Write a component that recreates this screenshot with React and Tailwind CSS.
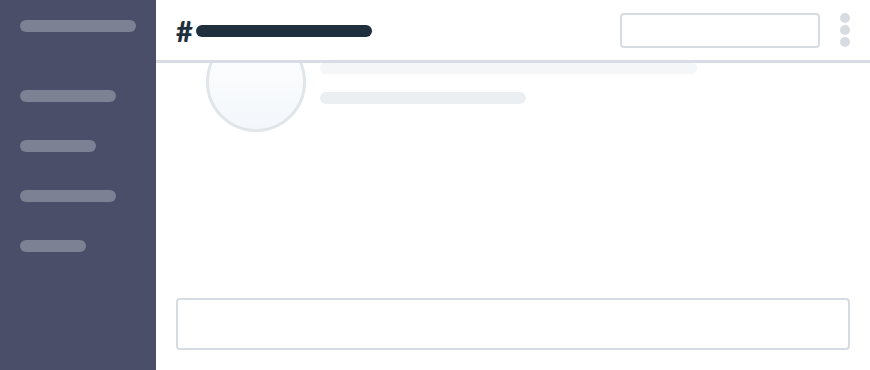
import React from 'react';

const navBars = ['w-[116px]', 'w-[96px]', 'w-[76px]', 'w-[96px]', 'w-[66px]'];

export default function App() {
    return (
        <div className="flex h-[370px] w-[870px] overflow-hidden bg-white font-['Liberation_Sans',sans-serif]">
            {/* Sidebar */}
            <aside className="w-[156px] shrink-0 bg-[#4a4e69] px-5 pt-5">
                <div className={`h-3 rounded-full bg-[#7d8194] ${navBars[0]}`} />
                <div className="mt-[58px] flex flex-col gap-[38px]">
                    {navBars.slice(1).map((w, i) => (
                        <div key={i} className={`h-3 rounded-full bg-[#7d8194] ${w}`} />
                    ))}
                </div>
            </aside>

            {/* Main */}
            <main className="flex min-w-0 flex-1 flex-col">
                <header className="relative z-10 flex h-[63px] shrink-0 items-center border-b-[3px] border-[#d7dde3] bg-white pl-5 pr-5">
                    <span className="font-['Lato',sans-serif] text-[29px] font-black leading-none text-[#1f2f3d]">#</span>
                    <div className="ml-[3px] mt-[1px] h-3 w-[176px] rounded-full bg-[#1f2f3d]" />
                    <div className="ml-auto h-[35px] w-[200px] rounded-[4px] border-2 border-[#d6dce2]" />
                    <div className="ml-5 flex flex-col gap-[2px]">
                        <span className="h-[10px] w-[10px] rounded-full bg-[#d6dce2]" />
                        <span className="h-[10px] w-[10px] rounded-full bg-[#d6dce2]" />
                        <span className="h-[10px] w-[10px] rounded-full bg-[#d6dce2]" />
                    </div>
                </header>

                <section className="flex-1 overflow-hidden">
                    <div className="-mt-[31px] flex pl-[50px]">
                        <div className="h-[100px] w-[100px] shrink-0 rounded-full border-[3px] border-[#e0e5ea] bg-gradient-to-b from-white to-[#f3f7fb]" />
                        <div className="ml-[14px] pt-[30px]">
                            <div className="h-3 w-[377px] rounded-full bg-[#f4f6f8]" />
                            <div className="mt-[18px] h-3 w-[206px] rounded-full bg-[#eceff2]" />
                        </div>
                    </div>
                </section>

                <footer className="shrink-0 px-5 pb-5">
                    <div className="h-[52px] rounded-[4px] border-2 border-[#d6dce2]" />
                </footer>
            </main>
        </div>
    );
}
